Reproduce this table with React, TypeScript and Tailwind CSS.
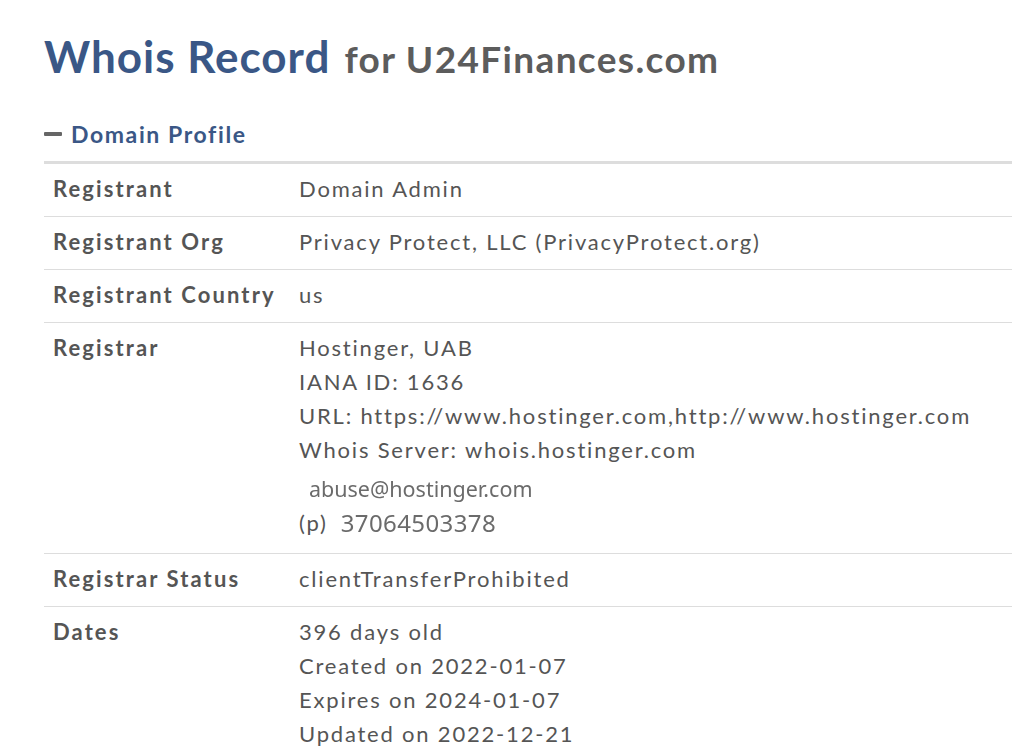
export default function App() {
  const rows: { label: string; lines: React.ReactNode }[] = [
    { label: "Registrant", lines: <div>Domain Admin</div> },
    { label: "Registrant Org", lines: <div>Privacy Protect, LLC (PrivacyProtect.org)</div> },
    { label: "Registrant Country", lines: <div>us</div> },
    {
      label: "Registrar",
      lines: (
        <>
          <div>Hostinger, UAB</div>
          <div>IANA ID: 1636</div>
          <div>URL: https://www.hostinger.com,http://www.hostinger.com</div>
          <div>Whois Server: whois.hostinger.com</div>
          <div className="pl-[10px] pt-[7px] h-[39px] font-['Noto_Sans',sans-serif] text-[21.5px] leading-[30px] tracking-normal text-[#6b6b6b] blur-[0.3px]">
            abuse@hostinger.com
          </div>
          <div className="flex items-center h-[34px] mb-[3px]">
            <span>(p)</span>
            <span className="ml-[13px] font-['Noto_Sans',sans-serif] text-[24px] leading-[34px] tracking-[0.4px] text-[#6b6b6b] blur-[0.3px]">
              37064503378
            </span>
          </div>
        </>
      ),
    },
    { label: "Registrar Status", lines: <div>clientTransferProhibited</div> },
    {
      label: "Dates",
      lines: (
        <>
          <div>396 days old</div>
          <div>Created on 2022-01-07</div>
          <div>Expires on 2024-01-07</div>
          <div>Updated on 2022-12-21</div>
        </>
      ),
    },
  ];

  return (
    <div className="min-h-screen bg-white pl-[44px] pt-[26px] font-['Lato',sans-serif] text-[#555]">
      {/* Title */}
      <h1 className="leading-[60px] whitespace-nowrap">
        <span className="text-[44px] font-bold tracking-[1px] text-[#3a5786]">Whois Record</span>
        <span className="ml-[14px] text-[37px] font-bold tracking-[1.35px] text-[#5c5c5c]">for U24Finances.com</span>
      </h1>

      {/* Section header */}
      <div className="mt-[22px] flex items-center h-[30px]">
        <span className="inline-block w-[18px] h-[4px] rounded-[1px] bg-[#666]" />
        <span className="ml-[9px] text-[23px] font-bold tracking-[1.6px] text-[#3a5786]">
          Domain Profile
        </span>
      </div>

      {/* Table */}
      <div className="mt-[12px] border-t-[3px] border-[#ddd]">
        {rows.map((r) => (
          <div
            key={r.label}
            className="flex border-b border-[#ddd] pt-[8px] pb-[10px] text-[22px] leading-[34px] tracking-[1.8px]"
          >
            <div className="w-[255px] pl-[9px] font-bold tracking-[2.1px] shrink-0">{r.label}</div>
            <div className="flex-1 whitespace-nowrap">{r.lines}</div>
          </div>
        ))}
      </div>
    </div>
  );
}
